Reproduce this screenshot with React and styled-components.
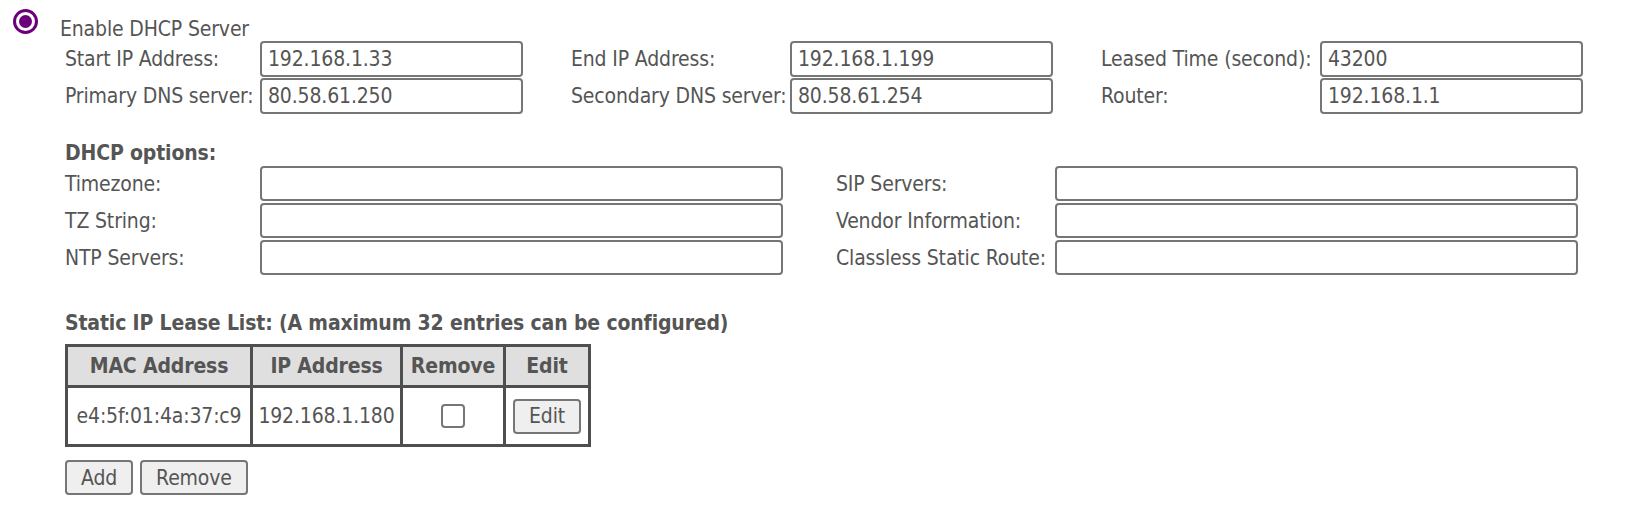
import styled, { createGlobalStyle } from 'styled-components';

const GlobalStyle = createGlobalStyle`
    body {
        margin: 0;
        background: #ffffff;
        color: #555555;
        font-family: 'DejaVu Sans Condensed', 'DejaVu Sans', sans-serif;
        font-stretch: condensed;
        font-size: 21px;
        letter-spacing: -0.15px;
    }
`;

const lanFields = [
    [
        { label: 'Start IP Address:', value: '192.168.1.33' },
        { label: 'End IP Address:', value: '192.168.1.199' },
        { label: 'Leased Time (second):', value: '43200' },
    ],
    [
        { label: 'Primary DNS server:', value: '80.58.61.250' },
        { label: 'Secondary DNS server:', value: '80.58.61.254' },
        { label: 'Router:', value: '192.168.1.1' },
    ],
];

const optionFields = [
    ['Timezone:', 'SIP Servers:'],
    ['TZ String:', 'Vendor Information:'],
    ['NTP Servers:', 'Classless Static Route:'],
];

const leases = [{ mac: 'e4:5f:01:4a:37:c9', ip: '192.168.1.180' }];

const App = () => {
    return (
        <>
            <GlobalStyle />
            <Page>
                <EnableRow>
                    <Radio />
                    <EnableLabel>Enable DHCP Server</EnableLabel>
                </EnableRow>

                <Content>
                    <LanGrid>
                        {lanFields.map((row) =>
                            row.map((field, i) => (
                                <Cell key={field.label}>
                                    <Label $indent={i === 0 ? 0 : 48}>{field.label}</Label>
                                    <TextInput $width={263} $height={36} defaultValue={field.value} />
                                </Cell>
                            ))
                        )}
                    </LanGrid>

                    <Heading $top={27}>DHCP options:</Heading>
                    <OptionsGrid>
                        {optionFields.map((row) =>
                            row.map((label, i) => (
                                <Cell key={label}>
                                    <Label $indent={i === 0 ? 0 : 53}>{label}</Label>
                                    <TextInput $width={523} $height={35} />
                                </Cell>
                            ))
                        )}
                    </OptionsGrid>

                    <Heading $top={36}>Static IP Lease List: (A maximum 32 entries can be configured)</Heading>
                    <LeaseTable>
                        <thead>
                            <tr>
                                <HeadCell $width={185}>MAC Address</HeadCell>
                                <HeadCell $width={150}>IP Address</HeadCell>
                                <HeadCell $width={103}>Remove</HeadCell>
                                <HeadCell $width={85}>Edit</HeadCell>
                            </tr>
                        </thead>
                        <tbody>
                            {leases.map((lease) => (
                                <tr key={lease.mac}>
                                    <DataCell>{lease.mac}</DataCell>
                                    <DataCell>{lease.ip}</DataCell>
                                    <DataCell>
                                        <CheckBox type='checkbox' />
                                    </DataCell>
                                    <DataCell>
                                        <Button>Edit</Button>
                                    </DataCell>
                                </tr>
                            ))}
                        </tbody>
                    </LeaseTable>

                    <ButtonRow>
                        <Button>Add</Button>
                        <Button>Remove</Button>
                    </ButtonRow>
                </Content>
            </Page>
        </>
    );
};

const Page = styled.div`
    padding: 9px 13px 20px;
`;

const EnableRow = styled.div`
    display: flex;
    align-items: flex-start;
`;

const Radio = styled.span`
    position: relative;
    flex-shrink: 0;
    width: 25px;
    height: 25px;
    box-sizing: border-box;
    border: 3px solid #6b007a;
    border-radius: 50%;
    background: #ffffff;

    &::after {
        content: '';
        position: absolute;
        left: 3px;
        top: 3px;
        width: 13px;
        height: 13px;
        border-radius: 50%;
        background: #6b007a;
    }
`;

const EnableLabel = styled.span`
    margin: 8px 0 0 22px;
    line-height: 24px;
`;

const Content = styled.div`
    padding-left: 52px;
`;

const LanGrid = styled.div`
    display: grid;
    grid-template-columns: repeat(3, auto);
    justify-content: start;
    row-gap: 1px;
`;

const OptionsGrid = styled.div`
    display: grid;
    grid-template-columns: repeat(2, auto);
    justify-content: start;
    row-gap: 2px;
    margin-top: 1px;
`;

const Cell = styled.div`
    display: flex;
    align-items: center;
`;

const Label = styled.span`
    box-sizing: border-box;
    width: ${({ $indent }) => 195 + $indent + ($indent ? 24 : 0)}px;
    padding-left: ${({ $indent }) => $indent}px;
    white-space: nowrap;
    line-height: 24px;
`;

const TextInput = styled.input`
    box-sizing: border-box;
    width: ${({ $width }) => $width}px;
    height: ${({ $height }) => $height}px;
    padding: 0 6px;
    border: 2px solid #767676;
    border-radius: 4px;
    font: inherit;
    letter-spacing: inherit;
    color: #555555;
    background: #ffffff;
    outline: none;
`;

const Heading = styled.div`
    margin-top: ${({ $top }) => $top}px;
    font-weight: bold;
    line-height: 24px;
`;

const LeaseTable = styled.table`
    margin-top: 9px;
    border-collapse: collapse;
    border: 3px solid #4f4f4f;
`;

const HeadCell = styled.th`
    width: ${({ $width }) => $width}px;
    height: 41px;
    padding: 0 3px;
    box-sizing: border-box;
    border: 3px solid #4f4f4f;
    background: #dfdfdf;
    font-weight: bold;
    text-align: center;
    white-space: nowrap;
`;

const DataCell = styled.td`
    height: 56px;
    padding: 0 3px;
    border: 3px solid #4f4f4f;
    text-align: center;
    white-space: nowrap;
`;

const CheckBox = styled.input`
    appearance: none;
    display: block;
    margin: 0 auto;
    width: 24px;
    height: 24px;
    box-sizing: border-box;
    border: 2px solid #767676;
    border-radius: 4px;
    background: #ffffff;
`;

const Button = styled.button`
    box-sizing: border-box;
    height: 35px;
    padding: 0 14px;
    border: 2px solid #767676;
    border-radius: 4px;
    background: #efefef;
    font: inherit;
    letter-spacing: inherit;
    color: #555555;
`;

const ButtonRow = styled.div`
    display: flex;
    gap: 7px;
    margin-top: 13px;
`;

export default App;
